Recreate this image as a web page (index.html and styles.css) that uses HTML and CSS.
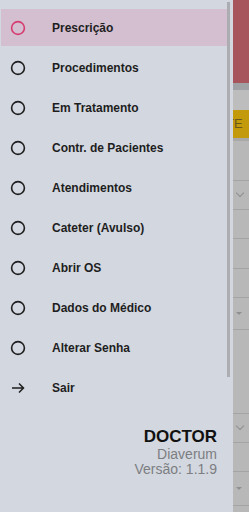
FILE: index.html
```html
<!DOCTYPE html>
<html lang="pt">
<head>
  <meta charset="UTF-8">
  <title>Doctor - Menu</title>
  <meta name="viewport" content="width=device-width, initial-scale=1.0">
  <link rel="stylesheet" href="styles.css">
</head>
<body>
  <!-- page behind the drawer (dimmed) -->
  <div id="page">
    <div class="pg-header"></div>
    <div class="pg-tabs"></div>
    <div class="pg-sub"></div>
    <div class="pg-status">TE</div>
    <div class="pg-row h40"></div>
    <div class="pg-row h29"><span class="chev"></span></div>
    <div class="pg-row h29"></div>
    <div class="pg-row h30"></div>
    <div class="pg-row h29"></div>
    <div class="pg-row h32"><span class="tri"></span></div>
    <div class="pg-row h84"></div>
    <div class="pg-row h29"><span class="chev"></span></div>
    <div class="pg-row h29"></div>
    <div class="pg-row h36"><span class="tri"></span></div>
  </div>

  <!-- side menu -->
  <nav id="drawer">
    <ul class="menu">
      <li class="menu-item active">
        <svg class="ico" viewBox="0 0 16 16"><circle cx="8" cy="8" r="6.4" /></svg>
        <span>Prescrição</span>
      </li>
      <li class="menu-item">
        <svg class="ico" viewBox="0 0 16 16"><circle cx="8" cy="8" r="6.4" /></svg>
        <span>Procedimentos</span>
      </li>
      <li class="menu-item">
        <svg class="ico" viewBox="0 0 16 16"><circle cx="8" cy="8" r="6.4" /></svg>
        <span>Em Tratamento</span>
      </li>
      <li class="menu-item">
        <svg class="ico" viewBox="0 0 16 16"><circle cx="8" cy="8" r="6.4" /></svg>
        <span>Contr. de Pacientes</span>
      </li>
      <li class="menu-item">
        <svg class="ico" viewBox="0 0 16 16"><circle cx="8" cy="8" r="6.4" /></svg>
        <span>Atendimentos</span>
      </li>
      <li class="menu-item">
        <svg class="ico" viewBox="0 0 16 16"><circle cx="8" cy="8" r="6.4" /></svg>
        <span>Cateter (Avulso)</span>
      </li>
      <li class="menu-item">
        <svg class="ico" viewBox="0 0 16 16"><circle cx="8" cy="8" r="6.4" /></svg>
        <span>Abrir OS</span>
      </li>
      <li class="menu-item">
        <svg class="ico" viewBox="0 0 16 16"><circle cx="8" cy="8" r="6.4" /></svg>
        <span>Dados do Médico</span>
      </li>
      <li class="menu-item">
        <svg class="ico" viewBox="0 0 16 16"><circle cx="8" cy="8" r="6.4" /></svg>
        <span>Alterar Senha</span>
      </li>
      <li class="menu-item">
        <svg class="ico arrow" viewBox="0 0 16 16"><path d="M2 8 H13.5 M9 3.5 L13.5 8 L9 12.5" /></svg>
        <span>Sair</span>
      </li>
    </ul>

    <div class="drawer-foot">
      <div class="app-name">DOCTOR</div>
      <div class="app-sub">Diaverum</div>
      <div class="app-sub">Versão: 1.1.9</div>
    </div>

    <!-- scroll thumb -->
    <div class="scroll-thumb"></div>
  </nav>
</body>
</html>
```

FILE: styles.css
```css
html, body {
  margin: 0;
  padding: 0;
  width: 249px;
  height: 512px;
  overflow: hidden;
  font-family: 'Liberation Sans', Arial, sans-serif;
}

/* dimmed page behind */
#page {
  display: flex;
  flex-direction: column;
  height: 512px;
  background: #b8b8b8;
}
.pg-header { height: 83px; background: #a8545d; flex: none; }
.pg-tabs   { height: 7px;  background: #9fa1a5; flex: none; }
.pg-sub    { height: 20px; background: #bdbdbd; flex: none; }
.pg-status {
  height: 28px;
  flex: none;
  background: #c39a0b;
  border-bottom: 3px solid #a8a8a8;
  color: #6a5820;
  font-size: 13px;
  line-height: 28px;
  padding-left: 226px;
  box-sizing: content-box;
}
.pg-row {
  flex: none;
  box-sizing: border-box;
  border-bottom: 1px solid #a4a4a4;
  display: flex;
  align-items: center;
  justify-content: flex-end;
  padding-right: 6px;
}
.h29 { height: 29px; }
.h30 { height: 30px; }
.h32 { height: 32px; }
.h36 { height: 34px; }
.h40 { height: 40px; }
.h84 { height: 84px; }

.chev {
  width: 5px;
  height: 5px;
  border-right: 1px solid #8f8f8f;
  border-bottom: 1px solid #8f8f8f;
  transform: rotate(45deg);
  margin-top: -4px;
}
.tri {
  width: 0;
  height: 0;
  border-left: 3px solid transparent;
  border-right: 3px solid transparent;
  border-top: 3px solid #8f8f8f;
  margin-right: 1px;
}

/* drawer: lies over the page */
#drawer {
  position: absolute;
  top: 0;
  left: 0;
  width: 233px;
  height: 512px;
  background: #d3d7df;
  display: flex;
  flex-direction: column;
}

.menu {
  list-style: none;
  margin: 0;
  padding: 9px 3px 0 1px;
  display: flex;
  flex-direction: column;
  gap: 3px;
}
.menu-item {
  height: 37px;
  display: flex;
  align-items: center;
  font-size: 12px;
  font-weight: bold;
  color: #1e1e1e;
}
.menu-item.active {
  background: #d4bfd0;
}
.ico {
  width: 16px;
  height: 16px;
  margin-left: 9px;
  margin-right: 26px;
  fill: none;
  stroke: #1e1e1e;
  stroke-width: 1.6;
  flex: none;
}
.active .ico {
  stroke: #d63b6f;
}
.ico.arrow {
  stroke-width: 1.5;
}

.drawer-foot {
  margin-top: 21px;
  padding-right: 16px;
  text-align: right;
}
.app-name {
  font-size: 17px;
  line-height: 20px;
  font-weight: bold;
  color: #111;
}
.app-sub {
  font-size: 14px;
  line-height: 15px;
  color: #7c7e82;
}

.scroll-thumb {
  position: absolute;
  top: 2px;
  left: 227px;
  width: 3px;
  height: 375px;
  background: #abadb2;
}
```
